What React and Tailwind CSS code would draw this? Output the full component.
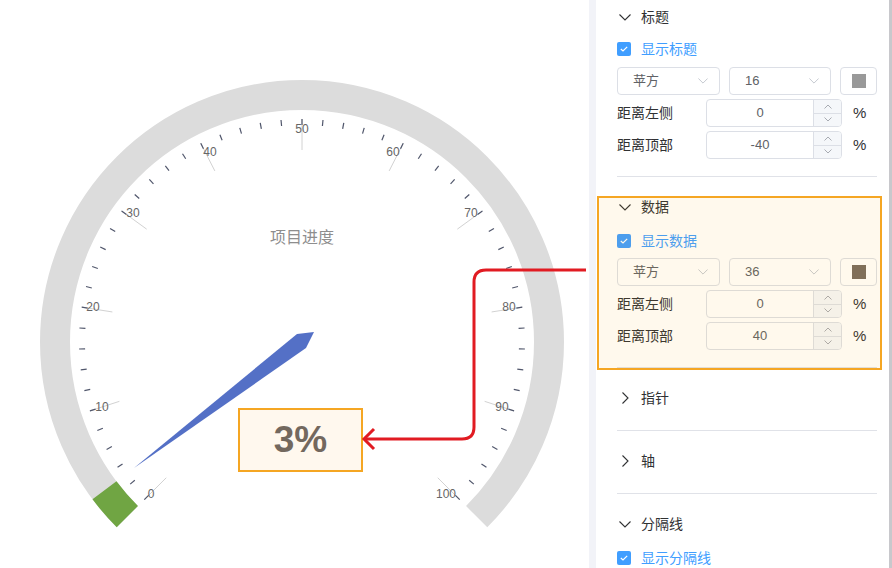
import React from "react";

const cx = 302;
const cy = 342;
const pt = (r, deg) => {
  const a = (deg * Math.PI) / 180;
  return [cx + r * Math.cos(a), cy - r * Math.sin(a)];
};

const LABELS = [
  [151, 494],
  [102, 407],
  [93, 307],
  [133, 213],
  [210, 152],
  [302, 129],
  [393, 152],
  [471, 213],
  [509, 307],
  [502, 407],
  [446, 494],
];

function Gauge() {
  const rm = 247;
  const s = pt(rm, 225);
  const e = pt(rm, -45);
  const g = pt(rm, 225 - 270 * 0.03);
  const ticks = [];
  for (let i = 0; i <= 50; i++) {
    const ang = 225 - (270 * i) / 50;
    if (i % 5 === 0) {
      const a = pt(192, ang);
      const b = pt(223, ang);
      ticks.push(
        <line key={"s" + i} x1={a[0]} y1={a[1]} x2={b[0]} y2={b[1]} stroke="#d2d2d2" strokeWidth="1" />
      );
    }
  }
  for (let i = 0; i <= 50; i++) {
    const ang = 225 - (270 * i) / 50;
    const a = pt(217, ang);
    const b = pt(223, ang);
    ticks.push(
      <line key={"t" + i} x1={a[0]} y1={a[1]} x2={b[0]} y2={b[1]} stroke="#50566b" strokeWidth="1.2" />
    );
  }
  const labels = LABELS.map((p, i) => (
    <text
      key={"l" + i}
      x={p[0]}
      y={p[1]}
      textAnchor="middle"
      dominantBaseline="central"
      fontSize="12"
      fill="#666666"
      fontFamily='"Liberation Sans", Arial, sans-serif'
    >
      {i * 10}
    </text>
  ));
  return (
    <svg width="589" height="568" viewBox="0 0 589 568" className="block">
      <path
        d={`M${s[0]} ${s[1]} A ${rm} ${rm} 0 1 1 ${e[0]} ${e[1]}`}
        fill="none"
        stroke="#dcdcdc"
        strokeWidth="30"
      />
      <path
        d={`M${s[0]} ${s[1]} A ${rm} ${rm} 0 0 1 ${g[0]} ${g[1]}`}
        fill="none"
        stroke="#70a543"
        strokeWidth="30"
      />
      {ticks}
      {labels}
      <text
        x="302"
        y="236"
        textAnchor="middle"
        dominantBaseline="central"
        fontSize="16"
        fill="#8e8e8e"
        fontFamily='"Noto Sans CJK SC", sans-serif'
      >
        项目进度
      </text>
      <polygon points="134,468 297,334 314,332 306,348" fill="#5470c6" />
    </svg>
  );
}

function ChevronDown({ className = "", color = "#303133", w = 12, h = 7 }) {
  return (
    <svg width={w} height={h} viewBox="0 0 12 7" className={className}>
      <polyline points="0.5,0.5 6,6 11.5,0.5" fill="none" stroke={color} strokeWidth="1.1" />
    </svg>
  );
}

function ChevronRight() {
  return (
    <svg width="7" height="12" viewBox="0 0 7 12">
      <polyline points="0.5,0.5 6,6 0.5,11.5" fill="none" stroke="#303133" strokeWidth="1.1" />
    </svg>
  );
}

function Header({ title, open }) {
  return (
    <div className="flex h-[34px] items-center">
      <div className={"flex w-[24px] items-center " + (open ? "pl-[2px]" : "pl-[5px]")}>
        {open ? <ChevronDown /> : <ChevronRight />}
      </div>
      <span className="text-[14px] text-[#303133]">{title}</span>
    </div>
  );
}

function Check({ label, className = "" }) {
  return (
    <div className={"flex h-[20px] items-center " + className}>
      <div className="flex h-[14px] w-[14px] items-center justify-center rounded-[2px] bg-[#409eff]">
        <svg width="8" height="6" viewBox="0 0 8 6">
          <polyline points="0.8,3 3,5 7.2,0.8" fill="none" stroke="#ffffff" strokeWidth="1.2" />
        </svg>
      </div>
      <span className="ml-[10px] text-[14px] text-[#409eff]">{label}</span>
    </div>
  );
}

function Select({ value, w }) {
  return (
    <div
      className={
        "flex h-[28px] items-center justify-between rounded-[4px] border border-[#dcdfe6] pl-[15px] pr-[11px] " + w
      }
    >
      <span className="text-[13px] text-[#606266]">{value}</span>
      <ChevronDown color="#c0c4cc" w={10} h={6} />
    </div>
  );
}

function Selects({ size, swatch, className = "" }) {
  return (
    <div className={"flex gap-[9px] " + className}>
      <Select value="苹方" w="w-[103px]" />
      <Select value={size} w="w-[102px]" />
      <div className="flex h-[28px] w-[37px] items-center justify-center rounded-[4px] border border-[#dcdfe6]">
        <div className={"h-[14px] w-[14px] " + swatch} />
      </div>
    </div>
  );
}

function NumRow({ label, value, className = "" }) {
  return (
    <div className={"flex h-[28px] items-center " + className}>
      <span className="w-[89px] text-[14px] text-[#303133]">{label}</span>
      <div className="flex h-[28px] w-[136px] overflow-hidden rounded-[4px] border border-[#dcdfe6]">
        <div className="flex flex-1 items-center justify-center text-[13px] text-[#606266]">{value}</div>
        <div className="flex w-[28px] flex-col border-l border-[#dcdfe6] bg-[#f5f7fa]">
          <div className="flex flex-1 items-center justify-center border-b border-[#dcdfe6]">
            <svg width="8" height="5" viewBox="0 0 8 5">
              <polyline points="0.5,4.5 4,1 7.5,4.5" fill="none" stroke="#a8abb2" strokeWidth="1" />
            </svg>
          </div>
          <div className="flex flex-1 items-center justify-center">
            <svg width="8" height="5" viewBox="0 0 8 5">
              <polyline points="0.5,0.5 4,4 7.5,0.5" fill="none" stroke="#a8abb2" strokeWidth="1" />
            </svg>
          </div>
        </div>
      </div>
      <span className="ml-[11px] text-[15px] text-[#303133]">%</span>
    </div>
  );
}

const Divider = ({ className = "" }) => <div className={"h-px bg-[#e0e2e8] " + className} />;

export default function App() {
  return (
    <div
      className="relative flex h-[568px] w-[892px] overflow-hidden bg-white"
      style={{ fontFamily: '"Liberation Sans", "Noto Sans CJK SC", sans-serif' }}
    >
      <div className="relative w-[589px] shrink-0">
        <Gauge />
        <div className="absolute left-[238px] top-[408px] flex h-[64px] w-[125px] items-center justify-center border-2 border-[#f5a623] bg-[#fff8ee] text-[37px] font-bold text-[#73685e]">
          3%
        </div>
      </div>
      <div className="w-[7px] shrink-0 bg-[#f2f3f8]" />
      <div className="relative w-[293px] shrink-0 pl-[21px] pr-[12px]">
        <div>
          <Header title="标题" open />
          <Check label="显示标题" className="mt-[5px]" />
          <Selects size="16" swatch="bg-[#999999]" className="mt-[8px]" />
          <NumRow label="距离左侧" value="0" className="mt-[4px]" />
          <NumRow label="距离顶部" value="-40" className="mt-[4px]" />
          <Divider className="mt-[17px]" />
        </div>
        <div className="pt-[13px]">
          <Header title="数据" open />
          <Check label="显示数据" className="mt-[7px]" />
          <Selects size="36" swatch="bg-[#776b60]" className="mt-[7px]" />
          <NumRow label="距离左侧" value="0" className="mt-[4px]" />
          <NumRow label="距离顶部" value="40" className="mt-[4px]" />
          <Divider className="mt-[17px]" />
        </div>
        <div className="pt-[13px]">
          <Header title="指针" />
          <Divider className="mt-[15px]" />
        </div>
        <div className="pt-[13px]">
          <Header title="轴" />
          <Divider className="mt-[15px]" />
        </div>
        <div className="pt-[13px]">
          <Header title="分隔线" open />
          <Check label="显示分隔线" className="mt-[7px]" />
        </div>
        <div className="pointer-events-none absolute left-[1px] top-[196px] h-[174px] w-[285px] border-2 border-[#f5a623] bg-[rgba(255,166,0,0.07)]" />
      </div>
      <div className="w-[3px] shrink-0 bg-[#c8c8cc]" />
      <svg className="pointer-events-none absolute left-0 top-0" width="892" height="568" viewBox="0 0 892 568">
        <path
          d="M586 270 H486 Q474 270 474 282 V427 Q474 439 462 439 H365"
          fill="none"
          stroke="#e11b22"
          strokeWidth="3"
        />
        <polyline points="374,429 364,439 374,449" fill="none" stroke="#e11b22" strokeWidth="3" />
      </svg>
    </div>
  );
}
